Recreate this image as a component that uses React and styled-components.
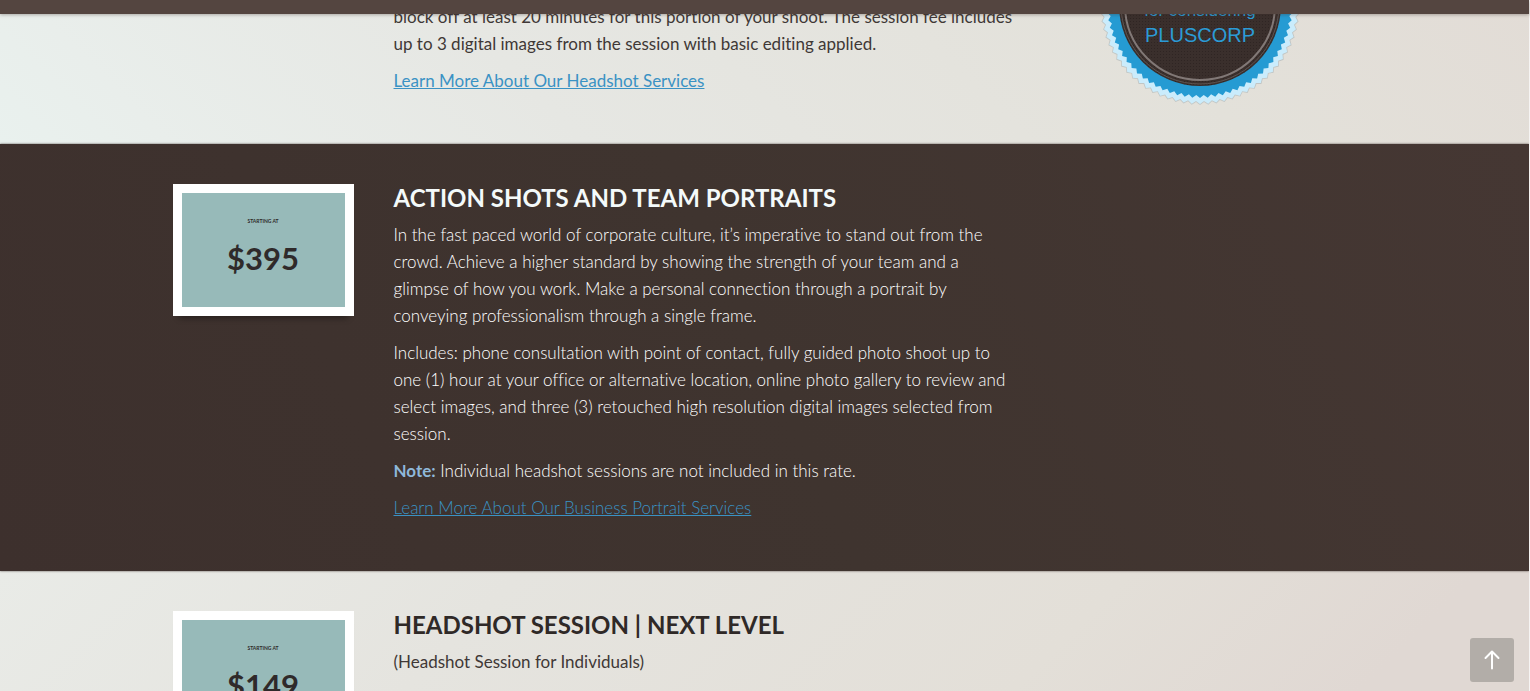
import React from "react";
import styled, { createGlobalStyle } from "styled-components";

const GlobalStyle = createGlobalStyle`
  * { box-sizing: border-box; }
  html { background: #fff; }
  body {
    margin: 0;
    font-family: Lato, "Open Sans", sans-serif;
    font-size: 17px;
    line-height: 27px;
    font-variant-ligatures: none;
    color: #403836;
  }
`;

const Page = styled.main`
  height: 100vh;
  overflow: hidden;
  border-right: 1px solid #f6f4f3;
`;

const HeaderBar = styled.header`
  position: fixed;
  inset: 0 1px auto 0;
  height: 14px;
  background: #544540;
  box-shadow: 0 1px 3px rgba(64, 48, 44, 0.35);
  z-index: 2;
`;

const surfaces = {
  mist: "linear-gradient(45deg, #e9f1ee 0%, #e9eeeb 10%, #e6e7e3 35%, #e3e1da 75%, #e2dcd6 100%)",
  sand: "linear-gradient(135deg, #e9ebe7 0%, #e5e4df 30%, #e3dfd8 65%, #e0d8d3 85%, #e0d8d3 100%)",
  cocoa: "linear-gradient(65deg, #3d302d, #3f342f 50%, #453733)",
};

const Section = styled.section`
  position: relative;
  padding: ${(p) => (p.$continued ? "3px" : "40px")} 24px 40px;
  color: ${(p) => (p.$surface === "cocoa" ? "#ffffff" : "inherit")};
  font-weight: ${(p) => (p.$surface === "cocoa" ? 300 : 400)};
  background: ${(p) => surfaces[p.$surface]};
  z-index: ${(p) => (p.$surface === "cocoa" ? 1 : 0)};
  box-shadow: ${(p) => (p.$surface === "cocoa" ? "0 0 2px rgba(61, 48, 45, 0.8)" : "none")};
`;

const Columns = styled.div`
  display: grid;
  grid-template-columns: 181px minmax(0, 622px) 1fr;
  column-gap: 40px;
  align-items: start;
  max-width: 1184px;
  margin: 0 auto;
`;

const Copy = styled.div`
  grid-column: 2;
`;

const Title = styled.h2`
  margin: 0 0 10px;
  font-size: 24px;
  line-height: 27px;
  font-weight: 700;
  color: ${(p) => (p.$light ? "#f4fafa" : "#2f2927")};
`;

const Paragraph = styled.p`
  margin: 0 0 10px;
`;

const Note = styled.strong`
  font-weight: 700;
  color: #8fb8da;
`;

const TextLink = styled.a`
  color: #3a92c4;
  text-decoration: underline;
`;

const PriceCard = styled.div`
  height: 132px;
  padding-top: 24px;
  border: 9px solid #fff;
  background: #97bab9;
  color: #2f2a2a;
  text-align: center;
  font-weight: 700;
  box-shadow: 0 8px 6px -6px rgba(0, 0, 0, 0.4);
`;

const PriceLabel = styled.div`
  font-size: 5px;
  line-height: 8px;
  font-weight: 700;
`;

const Price = styled.div`
  margin-top: 13px;
  font-size: 31px;
  line-height: 40px;
`;

const Seal = styled.svg`
  display: block;
  width: 200px;
  height: 106px;
  margin: -3px 0 -10px 44px;
  font-family: "Liberation Sans", Arial, sans-serif;
`;

const TopButton = styled.button`
  position: fixed;
  right: 16px;
  bottom: 9px;
  z-index: 2;
  display: grid;
  place-items: center;
  width: 44px;
  height: 44px;
  padding: 0;
  border: 0;
  border-radius: 3px;
  background: #b2ada8;
  cursor: pointer;
`;

function scallop(outer, inner, teeth) {
  return Array.from({ length: teeth * 2 }, (_, i) => {
    const r = i % 2 ? inner : outer;
    const a = (i * Math.PI) / teeth;
    return `${(100 + r * Math.sin(a)).toFixed(1)},${(5 + r * Math.cos(a)).toFixed(1)}`;
  }).join(" ");
}

function ThanksSeal() {
  return (
    <Seal viewBox="0 0 200 106" role="img" aria-label="for considering PLUSCORP">
      <defs>
        <pattern id="weave" width="3" height="3" patternUnits="userSpaceOnUse">
          <rect width="3" height="3" fill="#3a2f2c" />
          <path d="M0 0h1v1h-1z" fill="#2f2523" />
        </pattern>
      </defs>
      <polygon points={scallop(100, 97, 76)} fill="#8e9da5" opacity="0.4" />
      <polygon points={scallop(99, 96, 76)} fill="#caecfc" />
      <polygon points={scallop(93, 90, 76)} fill="#259bd3" />
      <circle cx="100" cy="5" r="81" fill="url(#weave)" />
      <circle cx="100" cy="5" r="79" fill="none" stroke="#5e5552" strokeWidth="1" />
      <circle cx="100" cy="5" r="75" fill="none" stroke="#817876" strokeWidth="2" />
      <g fill="#2b9bd6" textAnchor="middle">
        <text x="100" y="16" fontSize="17">for considering</text>
        <text x="100" y="42" fontSize="20">PLUSCORP</text>
      </g>
    </Seal>
  );
}

function PriceTag({ amount }) {
  return (
    <PriceCard>
      <PriceLabel>STARTING AT</PriceLabel>
      <Price>{amount}</Price>
    </PriceCard>
  );
}

export default function App() {
  return (
    <Page>
      <GlobalStyle />
      <HeaderBar />
      <Section $surface="mist" $continued>
        <Columns>
          <Copy>
            <Paragraph>
              block off at least 20 minutes for this portion of your shoot. The session fee includes up to 3 digital
              images from the session with basic editing applied.
            </Paragraph>
            <Paragraph>
              <TextLink href="#headshots">Learn More About Our Headshot Services</TextLink>
            </Paragraph>
          </Copy>
          <ThanksSeal />
        </Columns>
      </Section>
      <Section $surface="cocoa">
        <Columns>
          <PriceTag amount="$395" />
          <Copy>
            <Title $light>ACTION SHOTS AND TEAM PORTRAITS</Title>
            <Paragraph>
              In the fast paced world of corporate culture, it’s imperative to stand out from the crowd. Achieve a
              higher standard by showing the strength of your team and a glimpse of how you work. Make a personal
              connection through a portrait by conveying professionalism through a single frame.
            </Paragraph>
            <Paragraph>
              Includes: phone consultation with point of contact, fully guided photo shoot up to one (1) hour at your
              office or alternative location, online photo gallery to review and select images, and three (3) retouched
              high resolution digital images selected from session.
            </Paragraph>
            <Paragraph>
              <Note>Note:</Note> Individual headshot sessions are not included in this rate.
            </Paragraph>
            <Paragraph>
              <TextLink href="#portraits">Learn More About Our Business Portrait Services</TextLink>
            </Paragraph>
          </Copy>
        </Columns>
      </Section>
      <Section $surface="sand">
        <Columns>
          <PriceTag amount="$149" />
          <Copy>
            <Title>HEADSHOT SESSION | NEXT LEVEL</Title>
            <Paragraph>(Headshot Session for Individuals)</Paragraph>
          </Copy>
        </Columns>
      </Section>
      <TopButton aria-label="Back to top">
        <svg width="16" height="20" viewBox="0 0 16 20" fill="none" stroke="#fff" strokeWidth="2" strokeLinecap="round" strokeLinejoin="round">
          <path d="M8 18.500V1.500M1.500 8L8 1.500L14.500 8" />
        </svg>
      </TopButton>
    </Page>
  );
}
